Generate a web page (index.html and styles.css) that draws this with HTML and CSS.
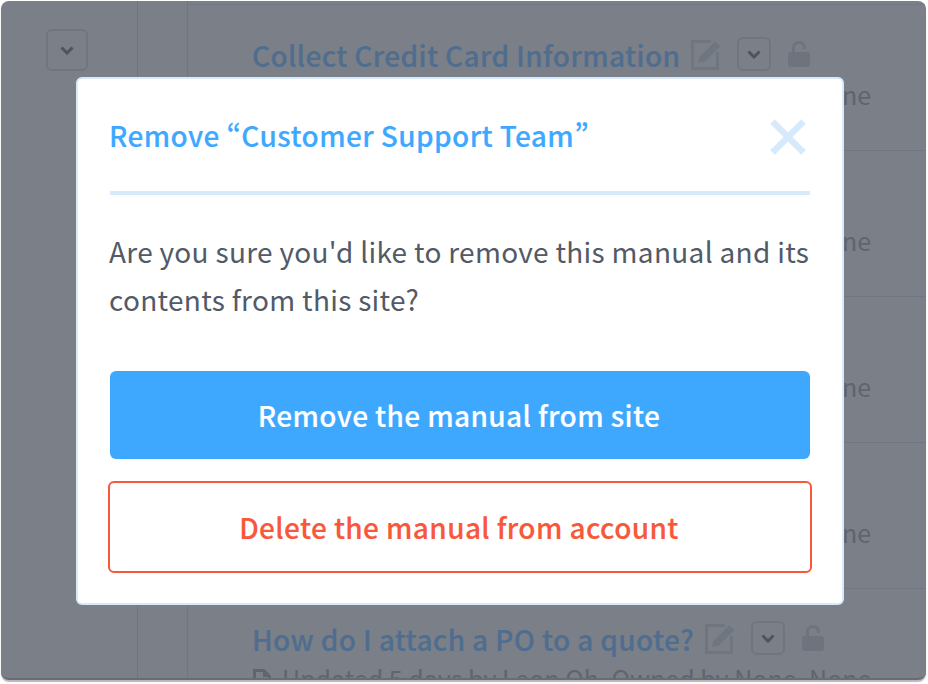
FILE: index.html
```html
<!DOCTYPE html>
<html lang="en">
<head>
    <meta charset="UTF-8">
    <title>Remove manual</title>
    <link rel="stylesheet" href="styles.css">
</head>
<body>
    <div class="window">
        <div class="page">
            <div class="rail">
                <button class="toggle"><svg width="14" height="9" viewBox="0 0 14 9"><path d="M1.5 1.500 7 7l5.500-5.500" fill="none" stroke="#4f535d" stroke-width="3"/></svg></button>
            </div>
            <div class="gutter"></div>
            <div class="list">
                <div class="row">
                    <div class="title-line">
                        <span class="title">Collect Credit Card Information</span>
                        <svg class="edit" width="30" height="30" viewBox="0 0 30 30"><path d="M20 1.500H1.500v27h25V12" fill="none" stroke="#70767f" stroke-width="3"/><path d="M7 23l1.500-6L24 1.500 29.500 6 14 21.500z" fill="#70767f"/></svg>
                        <button class="toggle small"><svg width="14" height="9" viewBox="0 0 14 9"><path d="M1.5 1.500 7 7l5.500-5.500" fill="none" stroke="#4f535d" stroke-width="3"/></svg></button>
                        <svg class="lock" width="22" height="26" viewBox="0 0 22 26"><path d="M5.500 12V7a5.500 5.500 0 0 1 11 0v1" fill="none" stroke="#6e737d" stroke-width="3"/><rect y="11" width="22" height="15" rx="3" fill="#6e737d"/></svg>
                    </div>
                    <div class="meta">Updated 5 days by Leon Oh, Owned by None, None</div>
                </div>
                <div class="row plain"><div class="meta">Updated 5 days by Leon Oh, Owned by None, None</div></div>
                <div class="row plain"><div class="meta">Updated 5 days by Leon Oh, Owned by None, None</div></div>
                <div class="row plain"><div class="meta">Updated 5 days by Leon Oh, Owned by None, None</div></div>
                <div class="row last">
                    <div class="title-line">
                        <span class="title">How do I attach a PO to a quote?</span>
                        <svg class="edit" width="30" height="30" viewBox="0 0 30 30"><path d="M20 1.500H1.500v27h25V12" fill="none" stroke="#70767f" stroke-width="3"/><path d="M7 23l1.500-6L24 1.500 29.500 6 14 21.500z" fill="#70767f"/></svg>
                        <button class="toggle small"><svg width="14" height="9" viewBox="0 0 14 9"><path d="M1.5 1.500 7 7l5.500-5.500" fill="none" stroke="#4f535d" stroke-width="3"/></svg></button>
                        <svg class="lock" width="22" height="26" viewBox="0 0 22 26"><path d="M5.500 12V7a5.500 5.500 0 0 1 11 0v1" fill="none" stroke="#6e737d" stroke-width="3"/><rect y="11" width="22" height="15" rx="3" fill="#6e737d"/></svg>
                    </div>
                    <div class="meta"><svg class="doc" width="18" height="22" viewBox="0 0 18 22"><path d="M1.500 1.500h9l6 6v13h-15z" fill="none" stroke="#5f646e" stroke-width="3"/><path d="M10 1h2l5 5v2h-7z" fill="#5f646e"/></svg>Updated 5 days by Leon Oh, Owned by None, None</div>
                </div>
            </div>
        </div>

        <div class="modal">
            <div class="modal-head">
                <h2>Remove “Customer Support Team”</h2>
                <svg class="close" width="36" height="36" viewBox="0 0 36 36"><path d="M2.500 2.500l31 31M33.500 2.500l-31 31" stroke="#d6eafb" stroke-width="6.500" fill="none"/></svg>
            </div>
            <p>Are you sure you'd like to remove this manual and its contents from this site?</p>
            <button class="btn primary">Remove the manual from site</button>
            <button class="btn danger">Delete the manual from account</button>
        </div>
    </div>
</body>
</html>
```

FILE: styles.css
```css
* {
    margin: 0;
    padding: 0;
    box-sizing: border-box;
    font-family: "Noto Sans CJK SC", "Noto Sans", sans-serif;
    font-feature-settings: "pwid";
}

body {
    width: 928px;
    height: 684px;
    background: #fff;
    overflow: hidden;
}

.window {
    position: relative;
    width: 925px;
    height: 679px;
    margin: 1px 0 0 1px;
    border-radius: 8px;
    overflow: hidden;
    background: #7a7f88;
    border-bottom: 2px solid #686c73;
    box-shadow: 0 2px 1px #b8b8b8;
}

.page {
    display: flex;
    height: 100%;
}

.rail {
    flex: none;
    width: 137px;
    border-right: 1px solid #6f747e;
    padding: 28px 0 0 45px;
}

.gutter {
    flex: none;
    width: 50px;
    border-right: 1px solid #6f7680;
}

.list {
    flex: 1;
    min-width: 0;
    border-top: 1px solid #737983;
    margin-top: 3px;
}

.row {
    height: 146px;
    padding: 32px 0 0 65px;
    border-bottom: 1px solid #6e7884;
    overflow: hidden;
}

.row.plain {
    padding-top: 72px;
}

.row.last {
    border-bottom: none;
}

.title-line {
    display: flex;
    align-items: center;
    height: 34px;
}

.title {
    margin: 2px 0 0 -1px;
    font-size: 28px;
    line-height: 44px;
    font-weight: 500;
    letter-spacing: 0.37px;
    color: #4f6e8f;
    white-space: nowrap;
    -webkit-text-stroke: 0.15px #4f6e8f;
}

.toggle {
    display: flex;
    align-items: center;
    justify-content: center;
    width: 42px;
    height: 42px;
    background: none;
    border: 2px solid #71757e;
    border-radius: 6px;
}

.toggle.small {
    flex: none;
    width: 34px;
    height: 34px;
    margin-left: 16px;
}

.edit {
    flex: none;
    margin: 2px 0 0 11px;
}

.lock {
    flex: none;
    margin-left: 17px;
}

.meta {
    display: flex;
    align-items: center;
    gap: 11px;
    justify-content: flex-end;
    font-size: 25px;
    line-height: 34px;
    color: #5f646e;
    white-space: nowrap;
    padding-right: 55px;
}

.row .title-line + .meta {
    margin-top: 6px;
}

.row.last .meta {
    justify-content: flex-start;
}

.doc {
    flex: none;
    margin-top: 3px;
}

.modal {
    position: absolute;
    left: 75px;
    top: 76px;
    width: 768px;
    height: 528px;
    padding: 0 32px;
    background: #fff;
    border: 2px solid #d6eafb;
    border-radius: 6px;
}

.modal-head {
    display: flex;
    justify-content: space-between;
    align-items: center;
    height: 116px;
    border-bottom: 4px solid #d6eafb;
}

.modal-head h2 {
    margin-left: -1px;
    font-size: 28px;
    line-height: 44px;
    font-weight: 500;
    letter-spacing: 0.4px;
    color: #3ea8ff;
    -webkit-text-stroke: 0.15px #3ea8ff;
}

.close {
    margin: 4px 4px 0 0;
}

.modal p {
    margin: 32px -4px 0 -1px;
    font-size: 28px;
    line-height: 48px;
    letter-spacing: 0.3px;
    color: #525a68;
}

.btn {
    display: block;
    width: 100%;
    height: 88px;
    padding-right: 2px;
    border-radius: 6px;
    font-size: 28px;
    font-weight: 500;
    letter-spacing: 0.38px;
    -webkit-text-stroke: 0.15px currentColor;
}

.primary {
    margin-top: 48px;
    background: #3ea8ff;
    color: #fff;
    border: none;
}

.danger {
    width: 704px;
    height: 92px;
    margin: 22px 0 0 -2px;
    background: #fff;
    color: #f9573a;
    border: 2px solid #f9573a;
}
```
